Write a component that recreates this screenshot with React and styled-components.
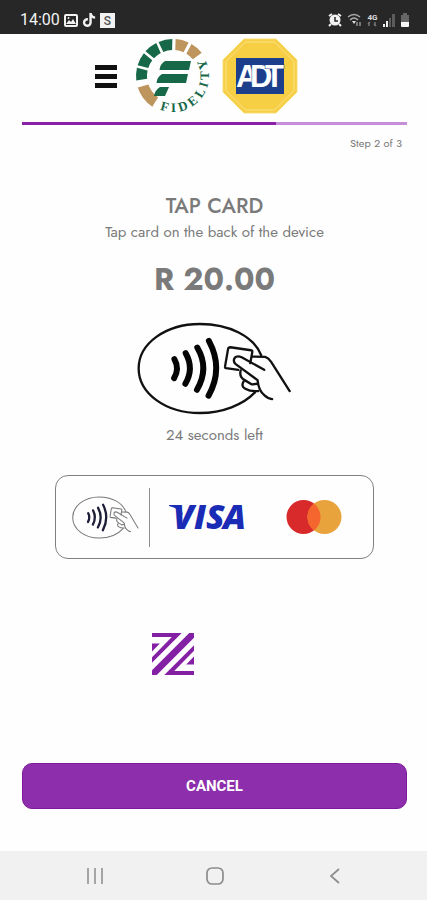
import React from "react";
import styled, { createGlobalStyle } from "styled-components";
import { FaTiktok } from "react-icons/fa6";

const GlobalStyle = createGlobalStyle`
  * { box-sizing: border-box; }
  body { margin: 0; background: #fefefe; }
`;

const Screen = styled.div`
  display: flex;
  flex-direction: column;
  min-height: 100vh;
  color: #7a7a7a;
  font-family: Jost, Lato, sans-serif;
`;

const StatusBar = styled.div`
  display: flex;
  align-items: center;
  justify-content: space-between;
  height: 34px;
  padding: 6px 17px 0 20px;
  background: #272727;
  color: #f2f2f2;
  font: 400 16px/20px Roboto, sans-serif;
`;

const StatusGroup = styled.div`
  display: flex;
  align-items: center;
  gap: ${({ $gap }) => $gap}px;
`;

const Header = styled.header`
  display: flex;
  align-items: center;
  justify-content: center;
  height: 88px;
  padding: 0 34px 4px 0;
`;

const MenuButton = styled.button`
  display: flex;
  margin-right: 16px;
  padding: 0;
  border: 0;
  background: none;
`;

const Logos = styled.div`
  display: flex;
  align-items: center;
  gap: 9px;
`;

const Main = styled.main`
  display: flex;
  flex: 1;
  flex-direction: column;
  align-items: center;
  padding: 0 20px 42px 22px;
`;

const Progress = styled.div`
  width: 100%;
  height: 3px;
  background: #c48fd6;
`;

const ProgressFill = styled.div`
  height: 100%;
  background: #8a1fa8;
`;

const Step = styled.p`
  align-self: flex-end;
  margin: 10px 5px 43px 0;
  font-size: 11px;
  line-height: 16px;
`;

const Title = styled.h1`
  margin: 0 0 4px;
  font-size: 21px;
  font-weight: 500;
  line-height: 24px;
`;

const Note = styled.p`
  margin: 0;
  font-size: 15px;
  line-height: 20px;
`;

const Amount = styled.p`
  margin: 20px 0 24px;
  font-size: 31px;
  font-weight: 700;
  line-height: 36px;
`;

const Countdown = styled(Note)`
  margin: 10px 0 30px;
`;

const Methods = styled.div`
  display: flex;
  align-items: center;
  width: 83%;
  height: 84px;
  padding: 0 31px 0 16px;
  border: 1px solid #808080;
  border-radius: 13px;
`;

const Divider = styled.div`
  width: 1px;
  height: 59px;
  margin: 0 19px 0 10px;
  background: #8c8c8c;
`;

const Brands = styled.div`
  display: flex;
  flex: 1;
  align-items: center;
  justify-content: space-between;
`;

const Provider = styled.div`
  display: flex;
  margin-top: 74px;
  padding-right: 84px;
`;

const CancelButton = styled.button`
  width: 100%;
  height: 46px;
  margin-top: auto;
  border: 1px solid #7d1a9c;
  border-radius: 10px;
  background: #8d2fac;
  color: #fff;
  font: 700 15px/20px Roboto, sans-serif;
`;

const NavBar = styled.nav`
  display: grid;
  grid-template-columns: repeat(3, 120px);
  justify-content: center;
  height: 49px;
  padding-left: 2px;
  background: #f1f1f1;
`;

const NavButton = styled.button`
  display: flex;
  align-items: center;
  justify-content: center;
  padding: 0;
  border: 0;
  background: none;
`;

const GREEN = "#176848";
const TAN = "#bd955d";

const polar = (radius, angle) => {
  const a = (angle * Math.PI) / 180;
  return `${(radius * Math.sin(a)).toFixed(2)} ${(-radius * Math.cos(a)).toFixed(2)}`;
};

const segment = (from, to) =>
  `M${polar(37, from)}A37 37 0 0 1 ${polar(37, to)}L${polar(26, to - 1)}A26 26 0 0 0 ${polar(26, from + 1)}Z`;

const segments = [
  [214, 252, TAN],
  [263, 283, GREEN],
  [287, 308, GREEN],
  [312, 333, GREEN],
  [337, 359, GREEN],
  [4, 25, TAN],
  [30, 51, TAN],
];

const arcLetters = [
  ["F", 195], ["I", 179], ["D", 162], ["E", 142],
  ["L", 122], ["I", 106], ["T", 89], ["Y", 69],
];

function FidelityLogo() {
  return (
    <svg width="80" height="80" viewBox="-40 -40 80 80" role="img" aria-label="Fidelity">
      {segments.map(([from, to, fill]) => (
        <path key={from} d={segment(from, to)} fill={fill} />
      ))}
      <g fill={GREEN}>
        <path d="M-8-15H18L16-6H-13.500Q-13-12-8-15Z" />
        <path d="M-11-2H15L13 7H-16.500Q-16 1-11-2Z" />
        <path d="M-13 11H-4L-8 20H-19Q-18 14-13 11Z" />
        {arcLetters.map(([letter, angle]) => (
          <text
            key={angle}
            transform={`rotate(${angle - 180}) translate(0 36)`}
            textAnchor="middle"
            fontFamily="Liberation Serif, serif"
            fontSize="13"
            fontWeight="700"
          >
            {letter}
          </text>
        ))}
      </g>
    </svg>
  );
}

function AdtLogo() {
  return (
    <svg width="76" height="76" viewBox="0 0 76 76" role="img" aria-label="ADT">
      <path d="M22 1H54L75 22V54L54 75H22L1 54V22Z" fill="#f7cf45" stroke="#f9dc74" strokeWidth="1" />
      <path d="M23.500 4H52.500L72 23.500V52.500L52.500 72H23.500L4 52.500V23.500Z" fill="none" stroke="#fae28c" strokeWidth="1" />
      <path d="M14 20H62V56H14Z" fill="#1d3f8b" />
      <text
        x="14 28 43"
        y="49"
        fill="#fff"
        stroke="#1d3f8b"
        strokeWidth="1"
        paintOrder="stroke"
        fontFamily="Liberation Sans, sans-serif"
        fontSize="31"
        fontWeight="700"
      >
        ADT
      </text>
    </svg>
  );
}

function TapDrawing({ width, height, line, wave, color, waveColor }) {
  return (
    <svg width={width} height={height} viewBox="34 19 468 280" preserveAspectRatio="none" fill="none" strokeLinecap="round" strokeLinejoin="round" aria-hidden="true">
      <g stroke={color} strokeWidth={line}>
        <path d="M409 119C386 62 312 25 224 25C120 25 39 84 39 159S120 293 224 293C292 293 355 268 390 231" />
        <path d="M340 163L303 158Q299 157 300 152L309 100Q310 95 316 95L378 104Q383 105 382 110L376 143" />
        <path d="M418 163L350 125Q336 119 329 127Q323 136 331 145L398 194Q401 226 419 240Q429 250 442 251" />
        <path d="M382 123L421 124Q431 127 439 139L495 227" />
        <path d="M347 165Q342 184 359 194L381 207L398 205" />
        <path d="M356 198Q347 213 361 220Q376 229 400 227" />
      </g>
      <g stroke={waveColor} strokeWidth={wave}>
        <path d="M147 131Q163 159 146 188" />
        <path d="M181 113Q207 159 180 205" />
        <path d="M216 96Q253 159 215 223" />
        <path d="M251 76Q296 159 250 241" />
      </g>
    </svg>
  );
}

function VisaLogo() {
  return (
    <svg width="80" height="56" viewBox="0 -14 80 56" role="img" aria-label="Visa" fill="#1a2bb5">
      <path d="M0 2H11L14 12Q9 5 0 3Z" />
      <text x="4 25 37 54" y="26" fontFamily="Open Sans, sans-serif" fontSize="34" fontStyle="italic" fontWeight="800">
        VISA
      </text>
    </svg>
  );
}

function MastercardLogo() {
  return (
    <svg width="56" height="36" viewBox="0 0 56 36" role="img" aria-label="Mastercard">
      <circle cx="17.500" cy="18" r="17" fill="#d92a2b" />
      <circle cx="38.500" cy="18" r="17" fill="#e8a33c" />
      <path d="M28 4.600A17 17 0 0 1 28 31.400A17 17 0 0 1 28 4.600Z" fill="#f4662d" />
    </svg>
  );
}

function ProviderLogo() {
  return (
    <svg width="42" height="42" viewBox="35 40 123 123" fill="#8420a4" aria-hidden="true">
      <path d="M35 40H122L35 127V111L93 52H35Z" />
      <path d="M35 71H58L35 94Z" />
      <path d="M144 40H158V54L49 163H35V149Z" />
      <path d="M158 76V92L100 151H158V163H71Z" />
      <path d="M158 109V132H135Z" />
    </svg>
  );
}

function PictureIcon() {
  return (
    <svg width="14" height="13" viewBox="0 0 14 13" aria-hidden="true">
      <rect x="1" y="1" width="12" height="11" rx="1" fill="none" stroke="#f2f2f2" strokeWidth="2" />
      <path d="M2 10L5 6L7 8L9 5L12 10Z" fill="#f2f2f2" />
      <circle cx="4.500" cy="4" r="1" fill="#f2f2f2" />
    </svg>
  );
}

function SBadge() {
  return (
    <svg width="15" height="15" viewBox="0 0 15 15" aria-hidden="true">
      <rect width="15" height="15" fill="#f2f2f2" />
      <text x="7.500" y="12" textAnchor="middle" fill="#555" fontFamily="Roboto, sans-serif" fontSize="12" fontWeight="500">S</text>
    </svg>
  );
}

function AlarmIcon() {
  return (
    <svg width="14" height="14" viewBox="0 0 14 14" aria-hidden="true">
      <path d="M1 3L4 1M10 1L13 3M3 11L1 13M11 11L13 13" stroke="#f2f2f2" strokeWidth="2" />
      <circle cx="7" cy="7" r="5.500" fill="#f2f2f2" />
      <path d="M7 4V8H10" fill="none" stroke="#272727" strokeWidth="1.500" />
    </svg>
  );
}

function WifiIcon() {
  return (
    <svg width="15" height="14" viewBox="0 0 15 14" fill="none" aria-hidden="true">
      <path d="M1 4Q7 -1 13 4M3 7Q7 3 11 7" stroke="#aaa" strokeWidth="1.500" />
      <path d="M5 8H9L7 11Z" fill="#ddd" />
      <path d="M10 13V9M13 9V13" stroke="#777" strokeWidth="2" />
    </svg>
  );
}

function NetworkIcon() {
  return (
    <svg width="11" height="14" viewBox="0 0 11 14" aria-hidden="true">
      <text x="5.500" y="7" textAnchor="middle" fill="#ddd" fontFamily="Roboto, sans-serif" fontSize="8" fontWeight="700">4G</text>
      <path d="M2 13V9M3 9L1 11M8 9V13M7 11L9 13" stroke="#777" strokeWidth="1.500" />
    </svg>
  );
}

function SignalIcon() {
  return (
    <svg width="12" height="14" viewBox="0 0 12 14" aria-hidden="true">
      <path d="M0 11H2V14H0ZM3 8H5V14H3Z" fill="#eee" />
      <path d="M6 5H8V14H6ZM9 1H12V14H9Z" fill="#5c5c5c" />
    </svg>
  );
}

function BatteryIcon() {
  return (
    <svg width="10" height="14" viewBox="0 0 10 14" aria-hidden="true">
      <path d="M3 0H7V2H9V9H1V2H3Z" fill="#666" />
      <path d="M1 9H9V13Q9 14 8 14H2Q1 14 1 13Z" fill="#f5f5f5" />
    </svg>
  );
}

export default function App() {
  return (
    <Screen>
      <GlobalStyle />
      <StatusBar>
        <StatusGroup $gap={4}>
          <span>14:00</span>
          <PictureIcon />
          <FaTiktok size={14} aria-hidden="true" />
          <SBadge />
        </StatusGroup>
        <StatusGroup $gap={5}>
          <AlarmIcon />
          <WifiIcon />
          <NetworkIcon />
          <SignalIcon />
          <BatteryIcon />
        </StatusGroup>
      </StatusBar>
      <Header>
        <MenuButton type="button" aria-label="Menu">
          <svg width="22" height="24" viewBox="0 0 22 24" fill="#111" aria-hidden="true">
            <path d="M0 1H22V6H0ZM0 10H22V15H0ZM0 19H22V24H0Z" />
          </svg>
        </MenuButton>
        <Logos>
          <FidelityLogo />
          <AdtLogo />
        </Logos>
      </Header>
      <Main>
        <Progress role="progressbar" aria-label="Progress" aria-valuenow={66} aria-valuemin={0} aria-valuemax={100}>
          <ProgressFill style={{ width: "66%" }} />
        </Progress>
        <Step>Step 2 of 3</Step>
        <Title>TAP CARD</Title>
        <Note>Tap card on the back of the device</Note>
        <Amount>R 20.00</Amount>
        <TapDrawing width={155} height={93} line={7} wave={18} color="#111" waveColor="#050505" />
        <Countdown>24 seconds left</Countdown>
        <Methods>
          <TapDrawing width={67} height={43} line={7} wave={16} color="#777" waveColor="#1d1d38" />
          <Divider />
          <Brands>
            <VisaLogo />
            <MastercardLogo />
          </Brands>
        </Methods>
        <Provider>
          <ProviderLogo />
        </Provider>
        <CancelButton type="button">CANCEL</CancelButton>
      </Main>
      <NavBar aria-label="System navigation">
        <NavButton type="button" aria-label="Recent apps">
          <svg width="16" height="16" viewBox="0 0 16 16" stroke="#8c8c8c" strokeWidth="1.500" aria-hidden="true">
            <path d="M1 0V16M8 0V16M15 0V16" />
          </svg>
        </NavButton>
        <NavButton type="button" aria-label="Home">
          <svg width="18" height="18" viewBox="0 0 18 18" fill="none" stroke="#8c8c8c" strokeWidth="1.700" aria-hidden="true">
            <rect x="1" y="1" width="16" height="16" rx="5" />
          </svg>
        </NavButton>
        <NavButton type="button" aria-label="Back">
          <svg width="10" height="16" viewBox="0 0 10 16" fill="none" stroke="#8c8c8c" strokeWidth="1.700" aria-hidden="true">
            <path d="M9 1L1 8L9 15" />
          </svg>
        </NavButton>
      </NavBar>
    </Screen>
  );
}
